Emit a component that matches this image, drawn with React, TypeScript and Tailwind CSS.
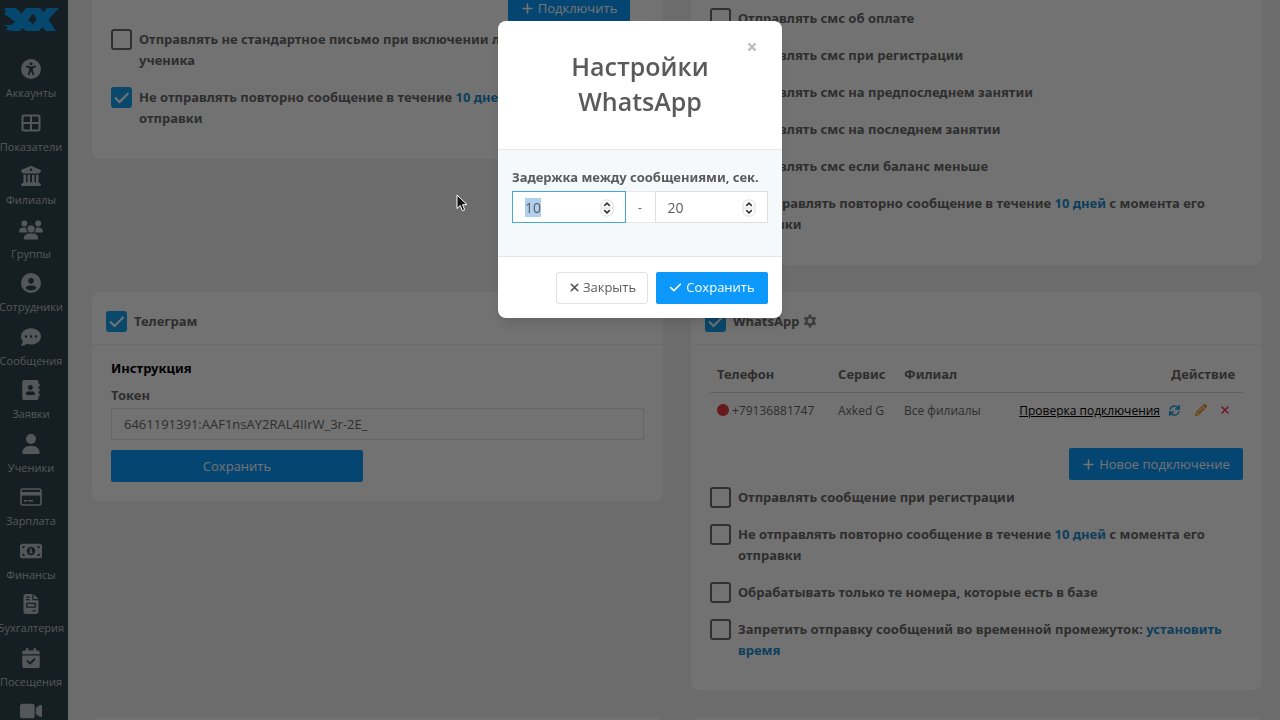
import { useEffect, useRef } from "react";
import type { ReactNode } from "react";
import {
  FaUniversalAccess,
  FaBuildingColumns,
  FaUsers,
  FaCircleUser,
  FaCommentDots,
  FaUser,
  FaVideo,
  FaPlus,
  FaCheck,
  FaXmark,
  FaPencil,
  FaCalendarCheck,
  FaFileInvoice,
  FaMoneyBill1,
} from "react-icons/fa6";
import { FaSync, FaAddressBook } from "react-icons/fa";

const SIDEBAR = [
  { label: "Аккаунты", icon: <FaUniversalAccess /> },
  { label: "Показатели", icon: <TableIcon /> },
  { label: "Филиалы", icon: <FaBuildingColumns /> },
  { label: "Группы", icon: <FaUsers className="w-6 h-6" /> },
  { label: "Сотрудники", icon: <FaCircleUser /> },
  { label: "Сообщения", icon: <FaCommentDots /> },
  { label: "Заявки", icon: <FaAddressBook /> },
  { label: "Ученики", icon: <FaUser /> },
  { label: "Зарплата", icon: <CardIcon /> },
  { label: "Финансы", icon: <FaMoneyBill1 className="w-[22px] h-[22px]" /> },
  { label: "Бухгалтерия", icon: <FaFileInvoice /> },
  { label: "Посещения", icon: <FaCalendarCheck /> },
  { label: "", icon: <FaVideo className="w-[22px] h-[22px]" /> },
];

const SMS_OPTIONS = [
  "Отправлять смс об оплате",
  "Отправлять смс при регистрации",
  "Отправлять смс на предпоследнем занятии",
  "Отправлять смс на последнем занятии",
  "Отправлять смс если баланс меньше",
];

function TableIcon() {
  return (
    <svg viewBox="0 0 20 20" fill="none" stroke="currentColor" strokeWidth="2">
      <rect x="1.5" y="2.5" width="17" height="15" rx="1.5" />
      <path d="M10 2.5v15M1.5 10h17" />
    </svg>
  );
}

function CardIcon() {
  return (
    <svg viewBox="0 0 22 20" className="w-[22px]">
      <rect x="1" y="2" width="20" height="16" rx="2" fill="none" stroke="currentColor" strokeWidth="1.6" />
      <path d="M1 5h20v3.5H1zM4 13h3v1.6H4zM8 13h5v1.6H8z" fill="currentColor" />
    </svg>
  );
}

function GearIcon() {
  return (
    <svg viewBox="0 0 14 14" className="w-[14px] h-[14px]" fill="none" stroke="currentColor">
      <circle cx="7" cy="7" r="3.6" strokeWidth="2.4" />
      <path
        d="M7 .5v2.4M7 11.1v2.4M1.4 3.7l2 1.2M10.6 9.1l2 1.2M1.4 10.3l2-1.2M10.6 4.9l2-1.2"
        strokeWidth="2.6"
      />
    </svg>
  );
}

function Logo() {
  return (
    <svg viewBox="0 0 58 28" className="w-[58px] h-7" fill="#0f9df2">
      <path d="M2 3H14L19 8 36 24 34 26H24L8 13 2 9 4 7Z" />
      <path d="M24 3H35L18 26H10L4 25 6 22 1 20 9 20 13 17Z" />
      <path d="M27 3H38L43 9 54 26H44L40 22Z" />
      <path d="M45 3H57L46 15 37 26H25Z" />
      <path d="M38 5 42 12 38 22 34 14Z" />
    </svg>
  );
}

function Option({ checked, children }: { checked?: boolean; children: ReactNode }) {
  return (
    <label className="flex items-start gap-[7px] font-['Noto_Sans',sans-serif] text-[13px] leading-[21px] font-bold">
      <span className="relative flex shrink-0">
        <input
          type="checkbox"
          defaultChecked={checked}
          className="peer appearance-none w-[21px] h-[21px] rounded-[3px] border-2 border-[#6b6b6b] checked:border-[#14a0ee] checked:bg-[#14a0ee]"
        />
        <svg
          viewBox="0 0 21 21"
          fill="none"
          stroke="#fff"
          strokeWidth="2"
          className="absolute inset-0 opacity-0 peer-checked:opacity-100 pointer-events-none"
        >
          <path d="M4 10.5 8.5 15 17.5 6" />
        </svg>
      </span>
      <span>{children}</span>
    </label>
  );
}

function Link({ children }: { children: ReactNode }) {
  return (
    <a href="#" className="text-[#1c8ccc]">
      {children}
    </a>
  );
}

function RepeatOption({ checked }: { checked?: boolean }) {
  return (
    <Option checked={checked}>
      Не отправлять повторно сообщение в течение <Link>10 дней</Link> с момента его отправки
    </Option>
  );
}

function PrimaryButton({ className, children }: { className?: string; children: ReactNode }) {
  return (
    <button
      type="button"
      className={`h-8 rounded-[2px] bg-[#0c99fb] text-white text-[13px] flex items-center justify-center gap-1 ${className ?? ""}`}
    >
      {children}
    </button>
  );
}

function Spinner() {
  return (
    <svg viewBox="0 0 14 18" className="absolute right-3 top-2 w-[14px] h-[18px]" fill="none">
      <rect x="1" y="1" width="12" height="16" rx="5" fill="#fff" stroke="#dcdcdc" />
      <path d="M1 9h12" stroke="#dcdcdc" />
      <path d="M4.2 6.8 7 4.2l2.8 2.6M4.2 11.2 7 13.8l2.8-2.6" stroke="#333" strokeWidth="1.6" />
    </svg>
  );
}

function Sidebar() {
  return (
    <aside className="w-[68px] h-full shrink-0 bg-[#2f444f] overflow-hidden flex flex-col">
      <a href="#" aria-label="AXK" className="h-[59px] shrink-0 pl-[2px] pt-[5px]">
        <Logo />
      </a>
      <nav className="w-[62px] flex-1 min-h-0 -mb-[23px] flex flex-col justify-between">
        {SIDEBAR.map((item, i) => (
          <a
            key={i}
            href="#"
            className="h-[42px] shrink-0 flex flex-col items-center gap-[6px] text-[#b9c1c5] text-[11px] leading-4"
          >
            <span className="h-5 flex items-center [&>svg]:min-w-5 [&>svg]:min-h-5">{item.icon}</span>
            {item.label && <span className="whitespace-nowrap">{item.label}</span>}
          </a>
        ))}
      </nav>
    </aside>
  );
}

function ConnectionTable() {
  return (
    <table className="w-full text-left">
      <thead className="font-['Noto_Sans',sans-serif] text-[13px] leading-[21px]">
        <tr className="h-[34px] border-b border-[#d4d4d4]">
          <th className="pl-[7px]">Телефон</th>
          <th>Сервис</th>
          <th>Филиал</th>
          <th className="pr-2 text-right">Действие</th>
        </tr>
      </thead>
      <tbody>
        <tr className="h-9">
          <td className="pl-[7px] w-[128px]">
            <span className="flex items-center gap-[3px]">
              <span className="w-3 h-3 rounded-full bg-[#e33b3b]" />
              +79136881747
            </span>
          </td>
          <td className="w-[66px]">Axked G</td>
          <td>Все филиалы</td>
          <td className="pr-3">
            <span className="flex items-center justify-end">
              <a href="#" className="text-black underline">
                Проверка подключения
              </a>
              <button type="button" aria-label="Обновить" className="ml-[9px] text-[#1a9be6]">
                <FaSync size={11} />
              </button>
              <button type="button" aria-label="Изменить" className="ml-[15px] text-[#f0932b]">
                <FaPencil size={12} />
              </button>
              <button type="button" aria-label="Удалить" className="ml-3 text-[#e8325a]">
                <FaXmark size={12} />
              </button>
            </span>
          </td>
        </tr>
      </tbody>
    </table>
  );
}

function SettingsModal() {
  const fromRef = useRef<HTMLInputElement>(null);

  useEffect(() => {
    fromRef.current?.focus();
    fromRef.current?.select();
  }, []);

  const inputClass =
    "w-full h-8 pl-3 pr-8 text-sm bg-white border border-[#dedede] outline-none focus:border-[#45a7dd] selection:bg-[#b0cfee] selection:text-[#5a5a5a] [appearance:textfield] [&::-webkit-inner-spin-button]:appearance-none";

  return (
    <div className="fixed inset-0 bg-black/55 flex items-start justify-center pt-[21px]">
      <div
        role="dialog"
        aria-labelledby="modal-title"
        className="relative w-[284px] rounded-lg bg-white text-[#5a5a5a] overflow-hidden shadow-lg"
      >
        <button type="button" aria-label="Закрыть окно" className="absolute top-[21px] right-[25px] text-[#bdbdbd]">
          <svg viewBox="0 0 10 10" className="w-[10px] h-[10px]" stroke="currentColor" strokeWidth="2.4">
            <path d="M1.5 1.5l7 7M8.5 1.5l-7 7" />
          </svg>
        </button>

        <div className="h-[129px] pt-7 px-14 border-b border-[#e4e6e7]">
          <h2 id="modal-title" className="text-center text-[25px] leading-[35px] font-semibold">
            Настройки WhatsApp
          </h2>
        </div>

        <div className="h-[107px] px-[14px] pt-[17px] bg-[#f5f9fb] border-b border-[#e4e6e7]">
          <label
            htmlFor="delay-from"
            className="block mb-[3px] font-['Noto_Sans',sans-serif] text-[13px] leading-[21px] font-bold"
          >
            Задержка между сообщениями, сек.
          </label>
          <div className="flex">
            <div className="relative flex-1">
              <input id="delay-from" ref={fromRef} type="number" defaultValue={10} className={inputClass} />
              <Spinner />
            </div>
            <span className="w-[29px] h-8 flex items-center justify-center bg-white border-y border-[#e8e8e8]">-</span>
            <div className="relative flex-1">
              <input type="number" aria-label="Задержка до" defaultValue={20} className={inputClass} />
              <Spinner />
            </div>
          </div>
        </div>

        <div className="h-[61px] px-[14px] flex items-center justify-end gap-2">
          <button
            type="button"
            className="h-8 w-[92px] rounded-[3px] border border-[#e2e2e2] text-[13px] flex items-center justify-center gap-[2px]"
          >
            <FaXmark size={13} />
            Закрыть
          </button>
          <PrimaryButton className="w-[112px]">
            <FaCheck size={13} />
            Сохранить
          </PrimaryButton>
        </div>
      </div>
    </div>
  );
}

export default function App() {
  return (
    <div className="h-screen flex overflow-hidden bg-[#f0f0f0] font-['Open_Sans',sans-serif] text-xs leading-[21px] text-[#676767]">
      <Sidebar />

      <main className="flex-1 -mt-2 pl-6 pr-[18px]">
        <div className="grid grid-cols-2 items-start gap-x-7 gap-y-[27px]">
          {/* Email */}
          <section className="rounded-b-lg bg-[#fdfdfd] px-[19px] pb-[30px]">
            <div className="flex justify-end pr-[14px] mb-[5px]">
              <PrimaryButton className="w-[122px]">
                <FaPlus size={13} />
                Подключить
              </PrimaryButton>
            </div>
            <div className="flex flex-col gap-4">
              <Option>Отправлять не стандартное письмо при включении личного кабинета ученика</Option>
              <RepeatOption checked />
            </div>
          </section>

          {/* SMS */}
          <section className="rounded-b-lg bg-[#fdfdfd] px-[19px] pt-4 pb-[30px] flex flex-col gap-4">
            {SMS_OPTIONS.map((text) => (
              <Option key={text}>{text}</Option>
            ))}
            <RepeatOption />
          </section>

          {/* Telegram */}
          <section className="rounded-lg bg-[#fdfdfd]">
            <div className="h-[53px] px-[14px] pt-[6px] flex items-center border-b border-[#efefef]">
              <Option checked>Телеграм</Option>
            </div>
            <div className="px-[19px] pt-[13px] pb-[19px]">
              <a
                href="#"
                className="block mb-[6px] font-['Noto_Sans',sans-serif] text-[13px] leading-[21px] font-bold text-black"
              >
                Инструкция
              </a>
              <label
                htmlFor="token"
                className="block mb-[2px] font-['Noto_Sans',sans-serif] text-[13px] leading-[21px] font-bold"
              >
                Токен
              </label>
              <input
                id="token"
                defaultValue="6461191391:AAF1nsAY2RAL4IIrW_3r-2E_"
                className="block w-full h-8 px-3 mb-[10px] text-[13px] border border-[#e2e2e2]"
              />
              <PrimaryButton className="w-[252px]">Сохранить</PrimaryButton>
            </div>
          </section>

          {/* WhatsApp */}
          <section className="rounded-lg bg-[#fdfdfd]">
            <div className="h-[53px] px-[14px] pt-[6px] flex items-center gap-1 border-b border-[#efefef]">
              <Option checked>WhatsApp</Option>
              <button type="button" aria-label="Настройки WhatsApp" className="text-[#858585]">
                <GearIcon />
              </button>
            </div>
            <div className="px-[19px] pt-[13px] pb-[29px]">
              <ConnectionTable />
              <div className="flex justify-end mt-5 mb-[7px]">
                <PrimaryButton className="w-[174px]">
                  <FaPlus size={13} />
                  Новое подключение
                </PrimaryButton>
              </div>
              <div className="flex flex-col gap-4">
                <Option>Отправлять сообщение при регистрации</Option>
                <RepeatOption />
                <Option>Обрабатывать только те номера, которые есть в базе</Option>
                <Option>
                  Запретить отправку сообщений во временной промежуток: <Link>установить время</Link>
                </Option>
              </div>
            </div>
          </section>

          <section className="h-12 rounded-t-lg bg-[#fdfdfd]" />
          <section className="h-12 rounded-t-lg bg-[#fdfdfd]" />
        </div>
      </main>

      <SettingsModal />

      {/* Mouse pointer */}
      <svg viewBox="0 0 12 18" className="fixed left-[456px] top-[194px] w-3 h-[18px]">
        <path d="M1 1v13.5l3.2-3 2.2 5.2 2.3-1-2.2-5H11z" fill="#111" stroke="#fff" strokeWidth="1" />
      </svg>
    </div>
  );
}
